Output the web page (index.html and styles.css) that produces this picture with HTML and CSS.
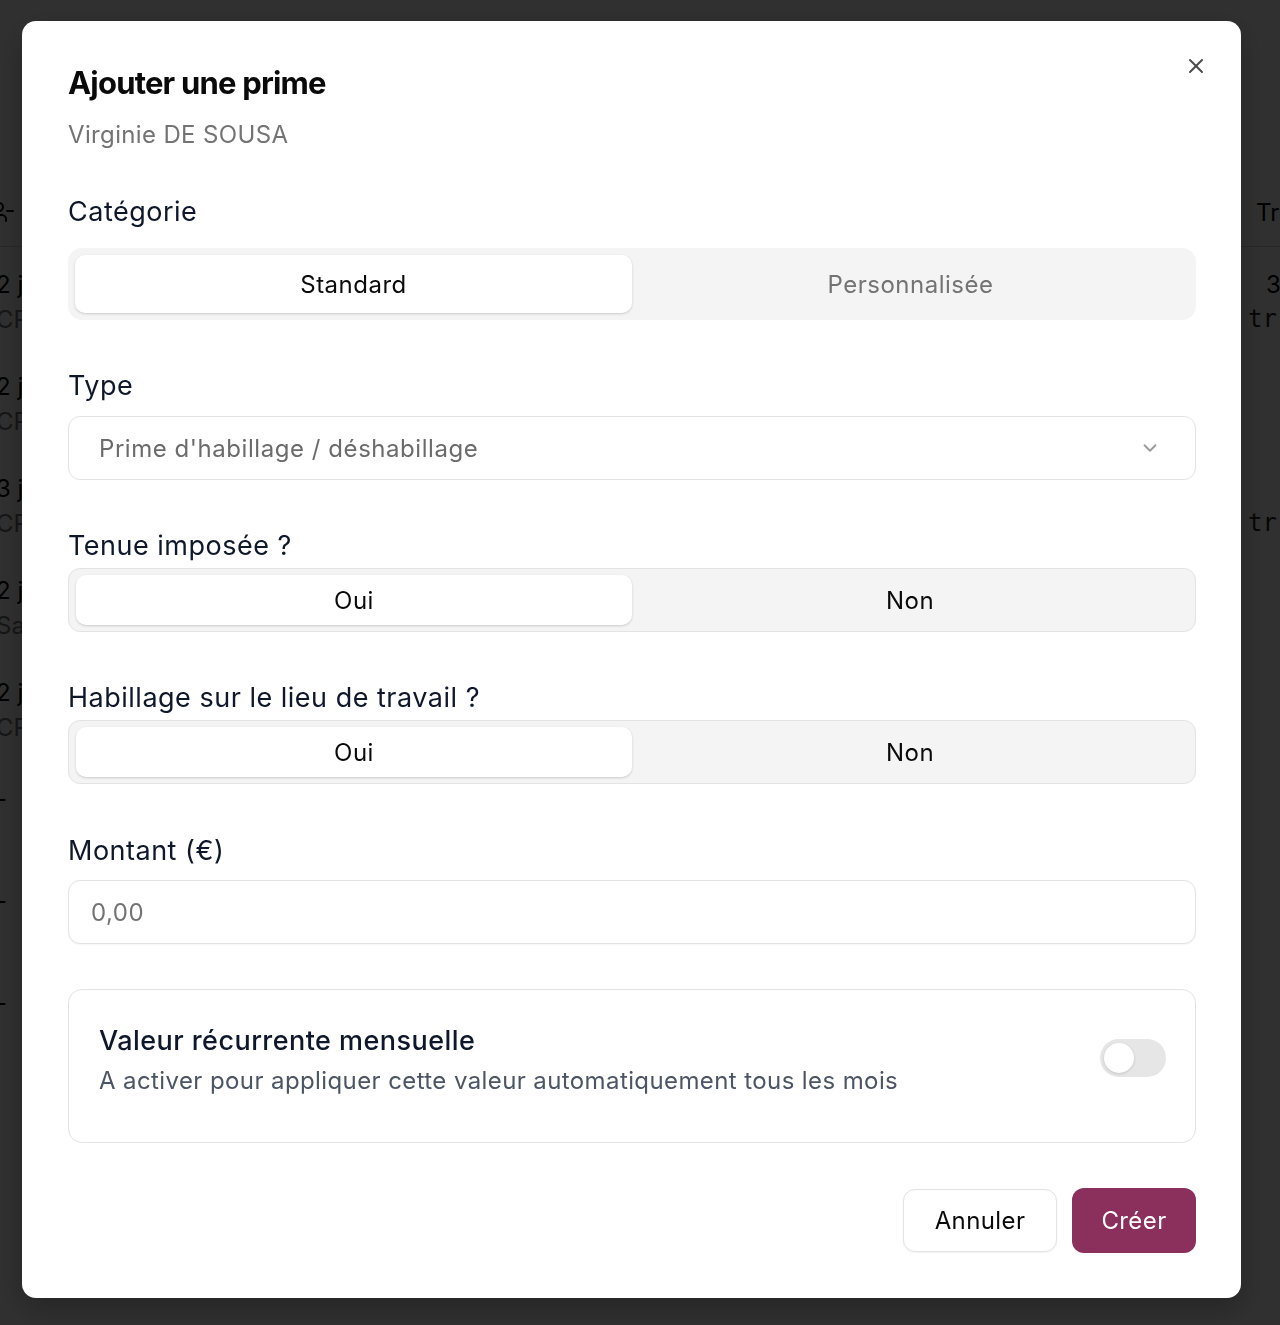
FILE: index.html
```html
<!DOCTYPE html>
<html lang="fr">
<head>
  <meta charset="UTF-8">
  <title>Ajouter une prime</title>
  <link rel="stylesheet" href="styles.css">
</head>
<body>
  <!-- Page derrière la modale -->
  <div class="app">
    <div class="table">
      <div class="tr th">
        <div class="td td-left">
          <svg class="th-icon" viewBox="0 0 24 24" width="24" height="24" fill="none" stroke="currentColor" stroke-width="2" stroke-linecap="round" stroke-linejoin="round"><circle cx="9" cy="7" r="4"/><path d="M2 21v-2a4 4 0 0 1 4-4h6a4 4 0 0 1 4 4v2"/><path d="M17 11h6"/></svg>
        </div>
        <div class="td"></div>
        <div class="td td-right">Tr</div>
      </div>
      <div class="tr"><div class="td td-left"><span>2 j</span><span class="sub">CP</span></div><div class="td"></div><div class="td td-right"><span class="num">3</span><span class="mono">tr</span></div></div>
      <div class="tr"><div class="td td-left"><span>2 j</span><span class="sub">CP</span></div><div class="td"></div><div class="td td-right"></div></div>
      <div class="tr"><div class="td td-left"><span>3 j</span><span class="sub">CP</span></div><div class="td"></div><div class="td td-right"><span>&nbsp;</span><span class="mono">tr</span></div></div>
      <div class="tr"><div class="td td-left"><span>2 j</span><span class="sub">Sa</span></div><div class="td"></div><div class="td td-right"></div></div>
      <div class="tr"><div class="td td-left"><span>2 j</span><span class="sub">CP</span></div><div class="td"></div><div class="td td-right"></div></div>
      <div class="tr"><div class="td td-left"><span class="dash">-</span></div><div class="td"></div><div class="td td-right"></div></div>
      <div class="tr"><div class="td td-left"><span class="dash">-</span></div><div class="td"></div><div class="td td-right"></div></div>
      <div class="tr"><div class="td td-left"><span class="dash">-</span></div><div class="td"></div><div class="td td-right"></div></div>
    </div>
  </div>

  <!-- Modale ajout de prime -->
  <div class="overlay">
    <div class="modal">
      <button class="modal-close" aria-label="Fermer">
        <svg viewBox="0 0 24 24" width="24" height="24" fill="none" stroke="currentColor" stroke-width="2" stroke-linecap="round"><path d="M18 6 6 18"/><path d="m6 6 12 12"/></svg>
      </button>
      <h2 class="modal-title">Ajouter une prime</h2>
      <p class="modal-subtitle">Virginie DE SOUSA</p>

      <div class="field field-categorie">
        <div class="field-label">Catégorie</div>
        <div class="segmented segmented-plain">
          <button class="seg-option active">Standard</button>
          <button class="seg-option muted">Personnalisée</button>
        </div>
      </div>

      <div class="field field-type">
        <div class="field-label">Type</div>
        <div class="select">
          <span class="select-value">Prime d'habillage / déshabillage</span>
          <svg class="select-chevron" viewBox="0 0 24 24" width="22" height="22" fill="none" stroke="currentColor" stroke-width="2" stroke-linecap="round" stroke-linejoin="round"><path d="m6 9 6 6 6-6"/></svg>
        </div>
      </div>

      <div class="field field-tight">
        <div class="field-label">Tenue imposée ?</div>
        <div class="segmented">
          <button class="seg-option active">Oui</button>
          <button class="seg-option">Non</button>
        </div>
      </div>

      <div class="field field-tight">
        <div class="field-label">Habillage sur le lieu de travail ?</div>
        <div class="segmented">
          <button class="seg-option active">Oui</button>
          <button class="seg-option">Non</button>
        </div>
      </div>

      <div class="field field-montant">
        <div class="field-label">Montant (€)</div>
        <input class="input" type="text" placeholder="0,00">
      </div>

      <div class="recurrent-card">
        <div class="recurrent-text">
          <div class="recurrent-title">Valeur récurrente mensuelle</div>
          <div class="recurrent-desc">A activer pour appliquer cette valeur automatiquement tous les mois</div>
        </div>
        <div class="switch"><div class="switch-knob"></div></div>
      </div>

      <div class="modal-footer">
        <button class="btn btn-outline">Annuler</button>
        <button class="btn btn-primary">Créer</button>
      </div>
    </div>
  </div>
</body>
</html>
```

FILE: styles.css
```css
* { box-sizing: border-box; }
body {
  margin: 0;
  font-family: Inter, "Noto Sans", Arial, sans-serif;
  background: #fff;
  color: #0a0a0a;
}
button, input {
  font-family: inherit;
}

/* page de fond */
.app {
  padding-top: 178px;
  margin-left: -4px;
}
.tr {
  display: grid;
  grid-template-columns: 60px 1fr 26px;
  height: 102px;
  border-bottom: 1px solid transparent;
}
.th {
  height: 69px;
  border-bottom: 1px solid #d4d4d4;
  align-items: center;
}
.td {
  display: flex;
  flex-direction: column;
  padding-top: 20px;
  font-size: 24px;
  line-height: 35px;
  color: #000;
}
.th .td { padding-top: 0; }
.td-right { padding-left: 2px; white-space: nowrap; }
.td .sub { color: #777; }
.td .num { padding-left: 10px; }
.td .mono { font-family: "DejaVu Sans Mono", monospace; color: #222; margin-left: -8px; }
.td .dash { margin-top: 4px; }
.th-icon { margin-left: -6px; color: #000; }

/* overlay + modale */
.overlay {
  position: fixed;
  inset: 0;
  background: rgba(0,0,0,0.81);
  padding-top: 21px;
  padding-left: 22px;
}
.modal {
  position: relative;
  width: 1219px;
  background: #fff;
  border-radius: 14px;
  padding: 44px 45px 45px 46px;
  box-shadow: 0 10px 30px rgba(0,0,0,0.25);
}
.modal-close {
  position: absolute;
  top: 33px;
  right: 33px;
  background: none;
  border: none;
  padding: 0;
  color: #4a4a4a;
  cursor: pointer;
  display: flex;
}
.modal-title {
  margin: 0;
  font-size: 31px;
  line-height: 36px;
  font-weight: 700;
  letter-spacing: -0.8px;
  color: #0a0a0a;
}
.modal-subtitle {
  margin: 18px 0 0 0;
  font-size: 24px;
  line-height: 32px;
  letter-spacing: 0.35px;
  color: #737373;
}

.field { margin-top: 50px; }
.field-label {
  font-size: 27px;
  line-height: 32px;
  letter-spacing: 0.5px;
  color: #0f172a;
  margin-bottom: 6px;
}
.field-categorie { margin-top: 45px; }
.field-categorie .field-label { margin-bottom: 20px; }
.field-type .field-label { margin-bottom: 14px; }
.field-montant { margin-top: 51px; }
.field-montant .field-label { margin-bottom: 13px; }

.segmented {
  display: flex;
  gap: 0;
  background: #f4f4f4;
  border: 1px solid #e3e3e3;
  border-radius: 12px;
  padding: 6px 7px;
  height: 64px;
}
.segmented-plain {
  border: none;
  height: 72px;
  padding: 7px;
  border-radius: 14px;
  background: #f4f4f5;
}
.seg-option {
  flex: 1;
  border: none;
  background: transparent;
  font-size: 24px;
  letter-spacing: 0.5px;
  color: #0a0a0a;
  border-radius: 10px;
  cursor: pointer;
}
.seg-option.active {
  background: #fff;
  box-shadow: 0 1px 3px rgba(0,0,0,0.12), 0 1px 2px rgba(0,0,0,0.06);
}
.seg-option.muted { color: #737373; }

.select {
  display: flex;
  align-items: center;
  justify-content: space-between;
  height: 64px;
  border: 1px solid #e3e3e3;
  border-radius: 12px;
  padding: 0 34px 0 30px;
}
.select-value {
  font-size: 24px;
  letter-spacing: 0.55px;
  color: #6b6b6b;
}
.select-chevron { color: #9a9a9a; }

.input {
  display: block;
  width: 100%;
  height: 64px;
  border: 1px solid #e3e3e3;
  border-radius: 12px;
  padding: 0 22px;
  font-size: 24px;
  letter-spacing: 0.5px;
  color: #0a0a0a;
  box-shadow: 0 1px 2px rgba(0,0,0,0.04);
  outline: none;
}
.input::placeholder { color: #737373; }

.recurrent-card {
  margin-top: 45px;
  border: 1px solid #e3e3e3;
  border-radius: 14px;
  padding: 33px 29px 45px 30px;
  display: flex;
  align-items: center;
  justify-content: space-between;
}
.recurrent-title {
  font-size: 27px;
  line-height: 36px;
  font-weight: 500;
  letter-spacing: 0.45px;
  color: #0f172a;
}
.recurrent-desc {
  margin-top: 6px;
  font-size: 24px;
  line-height: 32px;
  letter-spacing: 0.4px;
  color: #4b5563;
}
.switch {
  width: 66px;
  height: 38px;
  border-radius: 19px;
  background: #e6e6e6;
  padding: 4px;
  margin-top: -4px;
}
.switch-knob {
  width: 30px;
  height: 30px;
  border-radius: 50%;
  background: #fff;
  box-shadow: 0 1px 3px rgba(0,0,0,0.15);
}

.modal-footer {
  margin-top: 45px;
  display: flex;
  justify-content: flex-end;
  align-items: center;
  gap: 15px;
}
.btn {
  font-size: 24px;
  letter-spacing: 0.4px;
  border-radius: 12px;
  cursor: pointer;
}
.btn-outline {
  background: #fff;
  color: #0a0a0a;
  border: 1px solid #e3e3e3;
  height: 63px;
  width: 154px;
  box-shadow: 0 1px 2px rgba(0,0,0,0.05);
}
.btn-primary {
  background: #8b2f5d;
  color: #fff;
  border: none;
  height: 65px;
  width: 124px;
}
```
